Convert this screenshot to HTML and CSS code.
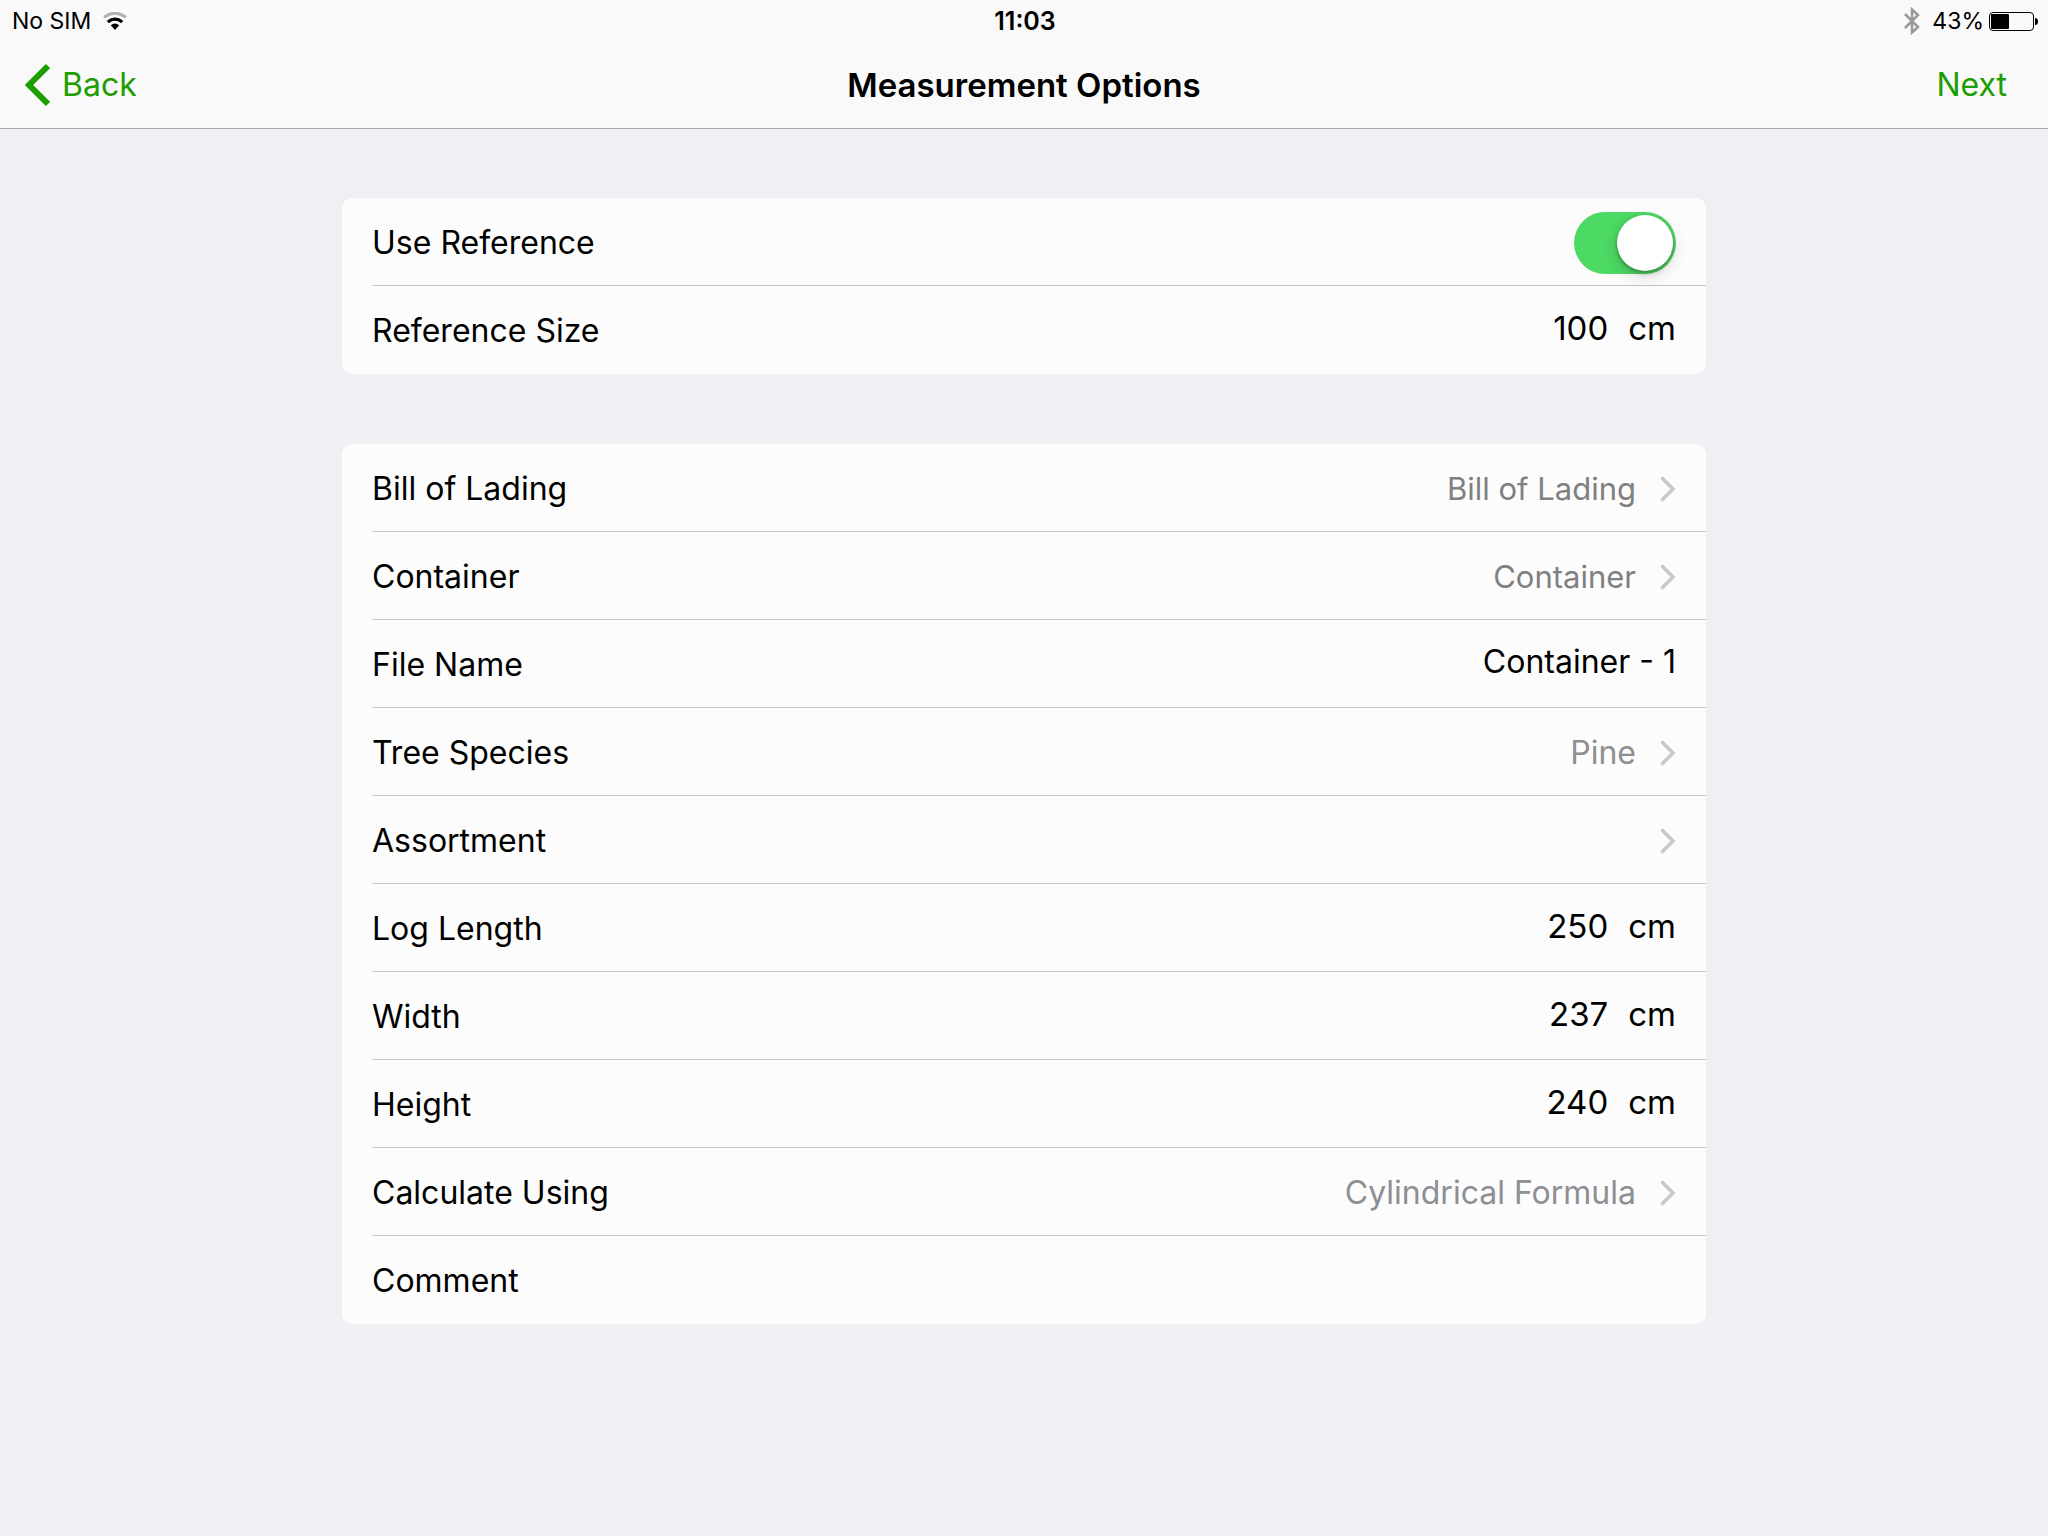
FILE: index.html
```html
<!DOCTYPE html>
<html lang="en">
<head>
<meta charset="utf-8">
<meta name="viewport" content="width=device-width, initial-scale=1">
<title>Measurement Options</title>
<link rel="stylesheet" href="styles.css">
</head>
<body>
<svg class="symbols" aria-hidden="true">
  <symbol id="chevron" viewBox="0 0 16 26"><path d="M1.5 1.500 13 13 1.500 24.500" fill="none" stroke="currentColor" stroke-width="3.500"/></symbol>
</svg>
<header class="top">
  <div class="status">
    <div class="status-left">
      <span>No SIM</span>
      <svg class="wifi" width="24" height="18" viewBox="0 0 24 18" fill="none" role="img" aria-label="Wi-Fi">
        <path d="M1 5.200Q12-2.800 23 5.200" stroke="#b2b2b2" stroke-width="3"/>
        <path d="M4.800 10Q12 4.200 19.200 10" stroke="#000" stroke-width="3.200"/>
        <path d="M7.800 13.200Q12 9.800 16.200 13.200L12 18Z" fill="#000"/>
      </svg>
    </div>
    <time class="clock">11:03</time>
    <div class="status-right">
      <svg class="bluetooth" width="16" height="28" viewBox="0 0 16 28" fill="none" role="img" aria-label="Bluetooth">
        <path d="M1 7 14 20 8 25.500V2.500L14 8 1 21" stroke="#999" stroke-width="2.500"/>
      </svg>
      <span>43%</span>
      <svg class="battery" width="50" height="20" viewBox="0 0 50 20" role="img" aria-label="Battery">
        <rect x="1.500" y="1.500" width="44" height="18" rx="3.500" fill="none" stroke="#000"/>
        <rect x="3" y="3" width="18" height="15" rx="1" fill="#000"/>
        <path d="M47 7Q50 7 50 10.500T47 14Z" fill="#000"/>
      </svg>
    </div>
  </div>
  <nav class="nav">
    <button class="nav-button" type="button">
      <svg width="26" height="44" viewBox="0 0 26 44" fill="none" aria-hidden="true"><path d="M24 3 5 22 24 41" stroke="currentColor" stroke-width="6"/></svg>
      Back
    </button>
    <h1 class="title">Measurement Options</h1>
    <button class="nav-button nav-next" type="button">Next</button>
  </nav>
</header>
<main class="options">
  <section class="card">
    <div class="row">
      <label for="use-reference">Use Reference</label>
      <input class="switch" id="use-reference" type="checkbox" role="switch" checked>
    </div>
    <div class="row">
      <label for="reference-size">Reference Size</label>
      <span class="field"><input class="entry" id="reference-size" type="text" inputmode="numeric" value="100"><span>cm</span></span>
    </div>
  </section>
  <section class="card">
    <button class="row" type="button"><span>Bill of Lading</span><span class="choice choice-empty">Bill of Lading<svg class="chevron" aria-hidden="true"><use href="#chevron"/></svg></span></button>
    <button class="row" type="button"><span>Container</span><span class="choice choice-empty">Container<svg class="chevron" aria-hidden="true"><use href="#chevron"/></svg></span></button>
    <div class="row">
      <label for="file-name">File Name</label>
      <input class="entry entry-wide" id="file-name" type="text" value="Container - 1">
    </div>
    <button class="row" type="button"><span>Tree Species</span><span class="choice">Pine<svg class="chevron" aria-hidden="true"><use href="#chevron"/></svg></span></button>
    <button class="row" type="button"><span>Assortment</span><span class="choice"><svg class="chevron" aria-hidden="true"><use href="#chevron"/></svg></span></button>
    <div class="row">
      <label for="log-length">Log Length</label>
      <span class="field"><input class="entry" id="log-length" type="text" inputmode="numeric" value="250"><span>cm</span></span>
    </div>
    <div class="row">
      <label for="width">Width</label>
      <span class="field"><input class="entry" id="width" type="text" inputmode="numeric" value="237"><span>cm</span></span>
    </div>
    <div class="row">
      <label for="height">Height</label>
      <span class="field"><input class="entry" id="height" type="text" inputmode="numeric" value="240"><span>cm</span></span>
    </div>
    <button class="row" type="button"><span>Calculate Using</span><span class="choice">Cylindrical Formula<svg class="chevron" aria-hidden="true"><use href="#chevron"/></svg></span></button>
    <div class="row">
      <label for="comment">Comment</label>
      <input class="entry entry-wide" id="comment" type="text">
    </div>
  </section>
</main>
</body>
</html>
```
FILE: styles.css
```css
* {
  box-sizing: border-box;
}

body {
  margin: 0;
  min-height: 100vh;
  background: #efeff4;
  color: #000;
  font: 32px/40px Inter, "Liberation Sans", sans-serif;
}

button,
input {
  margin: 0;
  padding: 0;
  border: 0;
  background: none;
  color: inherit;
  font: inherit;
}

.symbols {
  position: absolute;
  width: 0;
  height: 0;
}

.top {
  background: #f9f9f9;
  border-bottom: 1px solid #a7a7aa;
}

.status,
.nav {
  display: grid;
  grid-template-columns: 1fr auto 1fr;
  align-items: center;
}

.status {
  height: 40px;
  padding: 1px 10px 0 12px;
  font-size: 23px;
}

.status-left,
.status-right {
  display: flex;
  align-items: center;
  gap: 12px;
}

.status-right {
  justify-content: flex-end;
}

.battery {
  margin-left: -8px;
}

.clock {
  font-size: 25px;
  font-weight: 600;
}

.nav {
  height: 88px;
  padding: 1px 24px 0;
}

.nav-button {
  display: flex;
  align-items: center;
  gap: 12px;
  justify-self: start;
  color: #1c9d00;
}

.nav-next {
  justify-self: end;
  margin-right: 17px;
}

.title {
  margin: 0;
  font-size: 33px;
  font-weight: 600;
}

.options {
  display: flex;
  flex-direction: column;
  gap: 70px;
  padding: 69px 16.7%;
}

.card {
  padding-left: 30px;
  border-radius: 10px;
  background: #fcfcfc;
}

.row {
  display: flex;
  align-items: center;
  justify-content: space-between;
  width: 100%;
  height: 88px;
  padding: 2px 30px 0 0;
  border-bottom: 1px solid #c8c7cc;
  text-align: left;
}

.row:last-child {
  border-bottom-color: transparent;
}

.field {
  display: flex;
  align-items: center;
  gap: 20px;
  padding-bottom: 5px;
  font-size: 33px;
}

.entry {
  width: 120px;
  height: 40px;
  text-align: right;
}

.entry-wide {
  width: 60%;
  height: 46px;
  padding-bottom: 6px;
}

.choice {
  display: flex;
  align-items: center;
  gap: 24px;
  color: #8e8e93;
}

.choice-empty {
  color: #808080;
  font-size: 31px;
}

.chevron {
  width: 16px;
  height: 26px;
  color: #c7c7cc;
}

.switch {
  appearance: none;
  display: flex;
  justify-content: flex-end;
  width: 102px;
  height: 62px;
  padding: 3px;
  border-radius: 31px;
  background: #4cd964;
}

.switch::before {
  content: "";
  width: 56px;
  height: 56px;
  border-radius: 50%;
  background: #fff;
  box-shadow: 0 6px 16px rgba(0, 0, 0, 0.15), 0 2px 4px rgba(0, 0, 0, 0.3);
}

.switch:not(:checked) {
  justify-content: flex-start;
  background: #e5e5ea;
}
```
